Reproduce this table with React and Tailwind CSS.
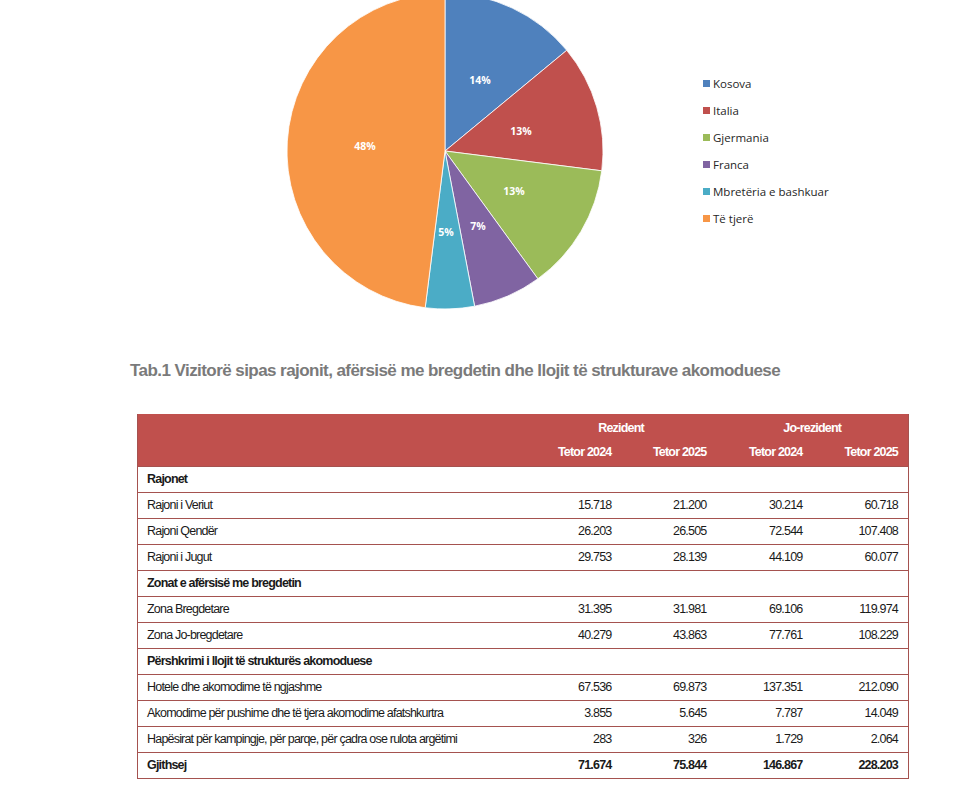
import React from "react";

const slices = [
  { name: "Kosova", value: 14, color: "#4F81BD", lx: 195, ly: 80 },
  { name: "Italia", value: 13, color: "#C0504D", lx: 236, ly: 131 },
  { name: "Gjermania", value: 13, color: "#9BBB59", lx: 229, ly: 191 },
  { name: "Franca", value: 7, color: "#8064A2", lx: 193, ly: 226 },
  { name: "Mbretëria e bashkuar", value: 5, color: "#4BACC6", lx: 161, ly: 232 },
  { name: "Të tjerë", value: 48, color: "#F79646", lx: 80, ly: 146 },
];

const rows = [
  { label: "Rajonet", section: true },
  { label: "Rajoni i Veriut", v: ["15.718", "21.200", "30.214", "60.718"] },
  { label: "Rajoni Qendër", v: ["26.203", "26.505", "72.544", "107.408"] },
  { label: "Rajoni i Jugut", v: ["29.753", "28.139", "44.109", "60.077"] },
  { label: "Zonat e afërsisë me bregdetin", section: true },
  { label: "Zona Bregdetare", v: ["31.395", "31.981", "69.106", "119.974"] },
  { label: "Zona Jo-bregdetare", v: ["40.279", "43.863", "77.761", "108.229"] },
  { label: "Përshkrimi i llojit të strukturës akomoduese", section: true },
  { label: "Hotele dhe akomodime të ngjashme", v: ["67.536", "69.873", "137.351", "212.090"] },
  { label: "Akomodime për pushime dhe të tjera akomodime afatshkurtra", v: ["3.855", "5.645", "7.787", "14.049"] },
  { label: "Hapësirat për kampingje, për parqe, për çadra ose rulota argëtimi", v: ["283", "326", "1.729", "2.064"] },
  { label: "Gjithsej", v: ["71.674", "75.844", "146.867", "228.203"], bold: true },
];

const narrow = { fontFamily: '"Liberation Sans", Arial, sans-serif' };

function Pie() {
  const cx = 160;
  const cy = 151;
  const r = 158;
  let acc = 0;
  const pt = (p) => {
    const a = (p / 100) * Math.PI * 2;
    return [cx + r * Math.sin(a), cy - r * Math.cos(a)];
  };

  return (
    <svg width="320" height="316" className="block shrink-0">
      {slices.map((s) => {
        const [x1, y1] = pt(acc);
        acc += s.value;
        const [x2, y2] = pt(acc);
        const large = s.value > 50 ? 1 : 0;
        return (
          <path
            key={s.name}
            d={`M${cx} ${cy} L${x1} ${y1} A${r} ${r} 0 ${large} 1 ${x2} ${y2} Z`}
            fill={s.color}
            stroke="#ffffff"
            strokeWidth="0.8"
          />
        );
      })}
      {slices.map((s) => (
        <text
          key={s.name + "l"}
          x={s.lx}
          y={s.ly}
          fill="#ffffff"
          fontSize="10.5"
          fontWeight="700"
          textAnchor="middle"
          dominantBaseline="central"
          fontFamily='"Open Sans", sans-serif'
        >
          {s.value}%
        </text>
      ))}
    </svg>
  );
}

export default function App() {
  return (
    <div className="w-[975px] min-h-[800px] bg-white">
      {/* chart */}
      <div className="flex h-[340px] items-start pl-[285px]">
        <Pie />
        <div
          className="ml-[98px] mt-[76px] flex flex-col gap-[12px] text-[11.5px] leading-[15px] text-[#262626]"
          style={{ fontFamily: '"Open Sans", sans-serif' }}
        >
          {slices.map((s) => (
            <div key={s.name} className="flex items-center gap-[3px]">
              <span className="h-[7px] w-[7px]" style={{ backgroundColor: s.color }} />
              <span>{s.name}</span>
            </div>
          ))}
        </div>
      </div>

      {/* title */}
      <div
        className="pl-[130px] pt-[20px] text-[17px] font-bold leading-[22px] tracking-[-0.56px] text-[#7a7a7a]"
        style={narrow}
      >
        Tab.1 Vizitorë sipas rajonit, afërsisë me bregdetin dhe llojit të strukturave akomoduese
      </div>

      {/* table */}
      <div className="pl-[137px] pt-[32px]" style={narrow}>
        <table className="w-[771px] table-fixed border-collapse text-[12.5px] tracking-[-0.8px] text-[#1a1a1a]">
          <colgroup>
            <col className="w-[388px]" />
            <col className="w-[96px]" />
            <col className="w-[95px]" />
            <col className="w-[96px]" />
            <col className="w-[96px]" />
          </colgroup>
          <thead className="bg-[#C0504D] font-bold text-white">
            <tr className="h-[26px]">
              <th className="border-l border-[#a5524f]" />
              <th colSpan={2} className="pt-[2px] text-center font-bold">Rezident</th>
              <th colSpan={2} className="border-r border-[#a5524f] pt-[2px] text-center font-bold">Jo-rezident</th>
            </tr>
            <tr className="h-[26px]">
              <th className="border-l border-[#a5524f]" />
              <th className="pr-[10px] text-right font-bold">Tetor 2024</th>
              <th className="pr-[10px] text-right font-bold">Tetor 2025</th>
              <th className="pr-[10px] text-right font-bold">Tetor 2024</th>
              <th className="border-r border-[#a5524f] pr-[10px] text-right font-bold">Tetor 2025</th>
            </tr>
          </thead>
          <tbody>
            {rows.map((r) => (
              <tr key={r.label} className="h-[26px] border border-[#a5524f]">
                <td className={`pl-[9px] ${r.section || r.bold ? "font-bold" : ""}`}>{r.label}</td>
                {(r.v || ["", "", "", ""]).map((v, i) => (
                  <td key={i} className={`pr-[10px] text-right ${r.bold ? "font-bold" : ""}`}>
                    {v}
                  </td>
                ))}
              </tr>
            ))}
          </tbody>
        </table>
      </div>
    </div>
  );
}
